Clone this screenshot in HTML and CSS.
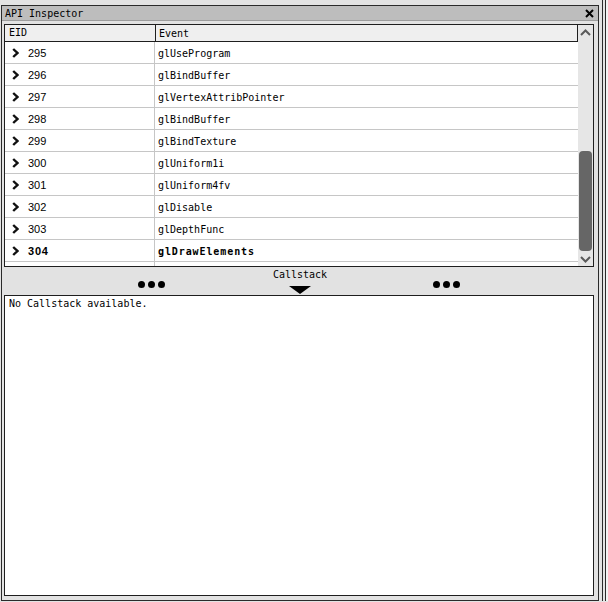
FILE: index.html
```html
<!DOCTYPE html>
<html>
<head>
<meta charset="utf-8">
<link rel="stylesheet" href="styles.css">
</head>
<body>
<div class="screen">
  <div class="panel">
    <div class="titlebar">
      <span class="title">API Inspector</span>
      <svg class="close" width="9" height="9" viewBox="0 0 9 9"><path d="M1 1 L8 8 M8 1 L1 8" stroke="#000" stroke-width="2" fill="none"/></svg>
    </div>
    <div class="table-frame">
      <div class="table">
        <div class="thead">
          <div class="c1 hc1">EID</div>
          <div class="c2 hc2">Event</div>
        </div>
        <div class="tbody">
          <div class="row"><div class="c1"><svg class="chev" width="7" height="10" viewBox="0 0 7 10"><path d="M1.2 1 L5.4 5 L1.2 9" stroke="#111" stroke-width="2.4" fill="none"/></svg><span class="eid">295</span></div><div class="c2">glUseProgram</div></div>
          <div class="row"><div class="c1"><svg class="chev" width="7" height="10" viewBox="0 0 7 10"><path d="M1.2 1 L5.4 5 L1.2 9" stroke="#111" stroke-width="2.4" fill="none"/></svg><span class="eid">296</span></div><div class="c2">glBindBuffer</div></div>
          <div class="row"><div class="c1"><svg class="chev" width="7" height="10" viewBox="0 0 7 10"><path d="M1.2 1 L5.4 5 L1.2 9" stroke="#111" stroke-width="2.4" fill="none"/></svg><span class="eid">297</span></div><div class="c2">glVertexAttribPointer</div></div>
          <div class="row"><div class="c1"><svg class="chev" width="7" height="10" viewBox="0 0 7 10"><path d="M1.2 1 L5.4 5 L1.2 9" stroke="#111" stroke-width="2.4" fill="none"/></svg><span class="eid">298</span></div><div class="c2">glBindBuffer</div></div>
          <div class="row"><div class="c1"><svg class="chev" width="7" height="10" viewBox="0 0 7 10"><path d="M1.2 1 L5.4 5 L1.2 9" stroke="#111" stroke-width="2.4" fill="none"/></svg><span class="eid">299</span></div><div class="c2">glBindTexture</div></div>
          <div class="row"><div class="c1"><svg class="chev" width="7" height="10" viewBox="0 0 7 10"><path d="M1.2 1 L5.4 5 L1.2 9" stroke="#111" stroke-width="2.4" fill="none"/></svg><span class="eid">300</span></div><div class="c2">glUniform1i</div></div>
          <div class="row"><div class="c1"><svg class="chev" width="7" height="10" viewBox="0 0 7 10"><path d="M1.2 1 L5.4 5 L1.2 9" stroke="#111" stroke-width="2.4" fill="none"/></svg><span class="eid">301</span></div><div class="c2">glUniform4fv</div></div>
          <div class="row"><div class="c1"><svg class="chev" width="7" height="10" viewBox="0 0 7 10"><path d="M1.2 1 L5.4 5 L1.2 9" stroke="#111" stroke-width="2.4" fill="none"/></svg><span class="eid">302</span></div><div class="c2">glDisable</div></div>
          <div class="row"><div class="c1"><svg class="chev" width="7" height="10" viewBox="0 0 7 10"><path d="M1.2 1 L5.4 5 L1.2 9" stroke="#111" stroke-width="2.4" fill="none"/></svg><span class="eid">303</span></div><div class="c2">glDepthFunc</div></div>
          <div class="row current"><div class="c1"><svg class="chev" width="7" height="10" viewBox="0 0 7 10"><path d="M1.2 1 L5.4 5 L1.2 9" stroke="#111" stroke-width="2.4" fill="none"/></svg><span class="eid">304</span></div><div class="c2">glDrawElements</div></div>
          <div class="row"><div class="c1"></div><div class="c2"></div></div>
        </div>
      </div>
      <div class="vscroll">
        <div class="sbtn"><svg width="11" height="7" viewBox="0 0 11 7"><path d="M1 6 L5.5 1.5 L10 6" stroke="#5a5a5a" stroke-width="2" fill="none"/></svg></div>
        <div class="track"><div class="thumb"></div></div>
        <div class="sbtn down"><svg width="11" height="7" viewBox="0 0 11 7"><path d="M1 1 L5.5 5.5 L10 1" stroke="#5a5a5a" stroke-width="2" fill="none"/></svg></div>
      </div>
    </div>
    <div class="splitter">
      <div class="split-label">Callstack</div>
      <div class="split-row">
        <div class="dots"><i></i><i></i><i></i></div>
        <div class="handle"><svg width="22" height="8" viewBox="0 0 22 8"><path d="M0 0 L22 0 L11 8 Z" fill="#000"/></svg></div>
        <div class="dots right"><i></i><i></i><i></i></div>
      </div>
    </div>
    <div class="callstack">No Callstack available.</div>
  </div>
  <div class="neighbor"><div class="neighbor-inner"></div></div>
</div>
</body>
</html>
```

FILE: styles.css
```css
html, body {
  margin: 0;
  padding: 0;
  background: #e3e3e3;
}
.screen {
  display: flex;
  width: 608px;
  height: 602px;
  box-sizing: border-box;
  padding: 0 0 1px 1px;
}
.panel {
  margin-top: 5px;
  width: 598px;
  height: 596px;
  box-sizing: border-box;
  border: 1px solid #2a2a2a;
  background: #e2e2e2;
  display: flex;
  flex-direction: column;
  font-family: "DejaVu Sans Mono", "Liberation Mono", monospace;
  font-size: 10px;
  color: #000;
}
.titlebar {
  height: 14px;
  border-bottom: 1px solid #9c9c9c;
  background: #bdbdbd;
  display: flex;
  align-items: center;
  justify-content: space-between;
  padding: 0 4px 0 3px;
  flex: none;
}
.title {
  line-height: 14px;
  padding-top: 1px;
}
.close {
  display: block;
}
.table-frame {
  margin: 3px 4px 0 2px;
  height: 243px;
  box-sizing: border-box;
  border: 1px solid #1e1e1e;
  display: flex;
  flex: none;
  background: #fff;
}
.table {
  flex: 1;
  display: flex;
  flex-direction: column;
  overflow: hidden;
}
.thead {
  display: flex;
  height: 16px;
  border-bottom: 1px solid #1e1e1e;
  border-right: 1px solid #1e1e1e;
  background: #efefef;
  flex: none;
}
.thead .c1 {
  border-right-color: #1e1e1e;
}
.c1 {
  width: 150px;
  border-right: 1px solid #c6c6c6;
  display: flex;
  align-items: center;
  flex: none;
}
.c2 {
  flex: 1;
  padding-left: 3px;
  display: flex;
  align-items: center;
}
.hc1 {
  padding-left: 4px;
  box-sizing: content-box;
  width: 146px;
  line-height: 16px;
}
.tbody {
  flex: 1;
  overflow: hidden;
}
.row {
  display: flex;
  height: 22px;
  box-sizing: border-box;
  border-bottom: 1px solid #c6c6c6;
}
.row .c1 {
  padding-left: 7px;
  box-sizing: border-box;
}
.row .c2 {
  padding-top: 1px;
}
.chev {
  display: block;
  flex: none;
  margin-top: 1px;
}
.eid {
  margin-left: 9px;
  font-family: "Liberation Sans", Arial, sans-serif;
  font-size: 11px;
  padding-top: 1px;
}
.current .eid {
  font-weight: bold;
  letter-spacing: 0.8px;
}
.current .c2 {
  font-weight: bold;
  letter-spacing: 0.9px;
}
.vscroll {
  width: 15px;
  flex: none;
  background: #e6e6e6;
  display: flex;
  flex-direction: column;
}
.sbtn {
  height: 14px;
  display: flex;
  align-items: center;
  justify-content: center;
  flex: none;
}
.sbtn svg {
  display: block;
}
.track {
  flex: 1;
  padding: 0 1px;
}
.thumb {
  margin-top: 112px;
  height: 100px;
  background: #666;
  border-radius: 4px;
}
.splitter {
  height: 28px;
  flex: none;
  display: flex;
  flex-direction: column;
}
.split-label {
  text-align: center;
  line-height: 12px;
  padding-top: 2px;
}
.split-row {
  display: grid;
  grid-template-columns: 1fr 0 1fr;
  align-items: start;
}
.dots {
  display: flex;
  justify-content: center;
  gap: 3px;
  padding-top: 0;
}
.dots.right {
  padding-right: 6px;
}
.dots i {
  display: block;
  width: 7px;
  height: 7px;
  border-radius: 50%;
  background: #000;
}
.handle {
  display: flex;
  justify-content: center;
  width: 0;
  padding-top: 5px;
}
.handle svg {
  display: block;
  flex: none;
}
.callstack {
  margin: 0 4px 4px 2px;
  height: 301px;
  box-sizing: border-box;
  border: 1px solid #1e1e1e;
  background: #fff;
  padding: 2px 4px;
  line-height: 12px;
  flex: none;
}
.neighbor {
  margin-left: 3px;
  width: 6px;
  height: 601px;
  box-sizing: border-box;
  border-left: 1px solid #2a2a2a;
  padding-left: 2px;
}
.neighbor-inner {
  height: 100%;
  border-left: 1px solid #2a2a2a;
  background: #f2f2f2;
}
```
